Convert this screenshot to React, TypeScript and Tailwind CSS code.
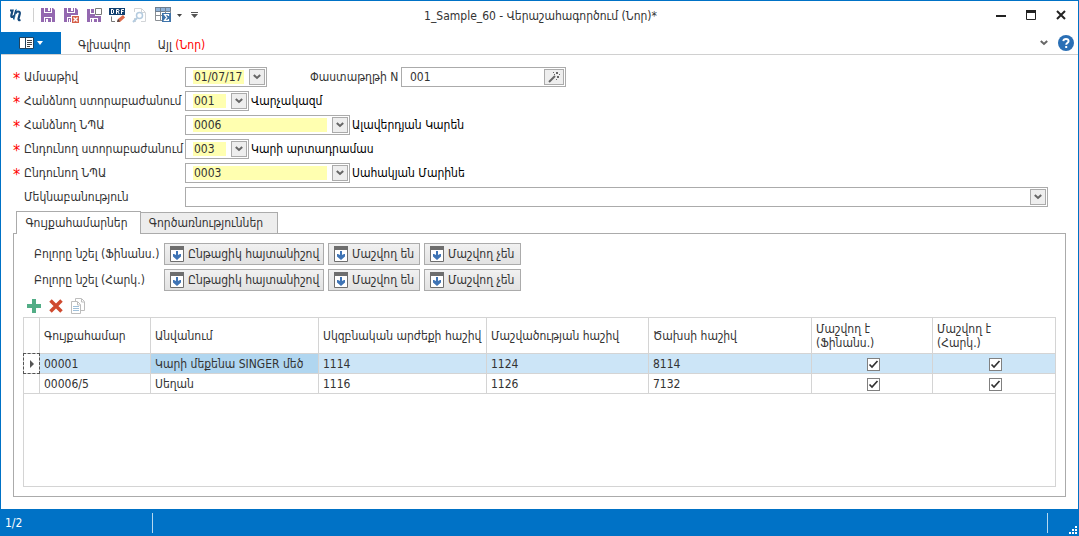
import { useState } from 'react'
import type { ReactNode } from 'react'

type Asset = {
  code: string
  name: string
  cost: string
  wear: string
  expense: string
}

const assets: Asset[] = [
  { code: '00001', name: 'Կարի մեքենա SINGER մեծ', cost: '1114', wear: '1124', expense: '8114' },
  { code: '00006/5', name: 'Սեղան', cost: '1116', wear: '1126', expense: '7132' },
]

const columns = [
  'Գույքահամար',
  'Անվանում',
  'Սկզբնական արժեքի հաշիվ',
  'Մաշվածության հաշիվ',
  'Ծախսի հաշիվ',
  'Մաշվող է (Ֆինանս.)',
  'Մաշվող է (Հարկ.)',
]

function Icon({ children, size = 16 }: { children: ReactNode; size?: number }) {
  return (
    <svg width={size} height={size} viewBox={`0 0 ${size} ${size}`} fill="none" aria-hidden="true" className="block shrink-0">
      {children}
    </svg>
  )
}

function LogoIcon() {
  return (
    <Icon>
      <path d="M3 3.500h2.500L4.300 8.500q-.3 1.700 1.200 1.500 1.200-.2 1.700-1.500" stroke="#14497d" strokeWidth="2.200" />
      <path d="M9.500 2 6.800 13" stroke="#5ba4d3" strokeWidth="1.200" />
      <path d="M8.500 6.500q.8-2 2.500-2 2.300 0 1.800 2.300l-1.300 5q-.3 1.700 2 1.200" stroke="#14497d" strokeWidth="2.200" />
      <path d="M8.700 3 6.500 12" stroke="#14497d" strokeWidth="1.200" />
    </Icon>
  )
}

function SaveIcon() {
  return (
    <Icon>
      <path d="M1 1h3v5h8V1h1l2 2v12h-3v-5H4v5H1z" fill="#9468b0" />
      <path d="M5 1h6v4H5zM5 11h6v4H5z" fill="#9468b0" />
      <path d="M8 1h2v3H8zM6 12h2v3H6z" fill="#fff" />
    </Icon>
  )
}

function SaveCloseIcon() {
  return (
    <Icon>
      <path d="M1 1h3v5h8V1h1l2 2v5H8v2H4v5H1z" fill="#9468b0" />
      <path d="M5 1h6v4H5zM5 11h3v4H5z" fill="#9468b0" />
      <path d="M8 1h2v3H8zM6 12h1v3H6z" fill="#fff" />
      <path d="M9 9h7v7H9z" fill="#d6604a" />
      <path d="m10.500 10.500 4 4m0-4-4 4" stroke="#fff" strokeWidth="1.300" />
    </Icon>
  )
}

function SaveNewIcon() {
  return (
    <Icon>
      <path d="M1 2h3v5h5v2h6v6h-3v-4H4v4H1zM5 2h3v4H5zM5 12h6v3H5z" fill="#9468b0" />
      <path d="M6 12h2v3H6z" fill="#fff" />
      <path d="M9.500 1.500h6v6h-6z" stroke="#777" fill="#fff" />
    </Icon>
  )
}

function DraftIcon() {
  return (
    <Icon>
      <path d="M0 1h16v7H0z" fill="#12406f" />
      <path d="M2.500 2v5M2 2.500h2l.5.500v3l-.5.500H2M7.500 7V2.500h2l.5.500v1l-.5.500h-2M9 5l1.200 2M12.500 7V2.500H15m-2.500 2h2" stroke="#fff" />
      <path d="M2.500 9.500v5H6" stroke="#777" />
      <path d="m8 15 1-3 5-4 2 2.500-5 4.500z" fill="#dc6b4c" />
      <path d="m8 15 1-3 2 2.500z" fill="#444" />
    </Icon>
  )
}

function PreviewIcon() {
  return (
    <Icon>
      <path d="M2.500 5V1.500h7l4 4v9H9M2.500 11v3.500H4M9.500 2v3.500H13" stroke="#d2d5d8" />
      <circle cx="7.500" cy="8.500" r="3" stroke="#b4cbdf" strokeWidth="1.500" />
      <path d="m5 11-4 4" stroke="#b4cbdf" strokeWidth="2" />
    </Icon>
  )
}

function SumTableIcon() {
  return (
    <Icon>
      <path d="M0 0h16v5H0z" fill="#6f7f90" />
      <path d="M1 1h4v3H1zM6 1h4v3H6zM11 1h4v3h-4z" fill="#8fb2d8" />
      <path d="M.5 5v8.500H7M5.500 5v8.500M10.500 4v2M15.500 4v2M0 8.500h7" stroke="#8a8f94" />
      <path d="M7 6h9v9H7z" fill="#3f74ab" />
      <path d="M13.500 9V7.700h-4l2.300 2.800-2.300 2.800h4V12" stroke="#fff" strokeWidth="1.200" />
    </Icon>
  )
}

function FillDownIcon() {
  return (
    <svg width="14" height="16" viewBox="0 0 14 16" fill="none" aria-hidden="true" className="block shrink-0">
      <path d="M.5.500h13v15H.5z" fill="#fff" stroke="#6e6e6e" />
      <path d="M0 0h14v4H0z" fill="#6e6e6e" />
      <path d="M6 5h2v4l2-1h1v2.500L7 14l-4-3.500V8h1l2 1z" fill="#3f74b5" />
    </svg>
  )
}

function Chevron() {
  return (
    <svg width="8" height="6" viewBox="0 0 8 6" fill="none" aria-hidden="true" className="block">
      <path d="m.8 1 3.200 3L7.200 1" stroke="#666" strokeWidth="2" />
    </svg>
  )
}

const arrowBox = 'flex w-4 h-4 items-center justify-center border border-[#ababab] bg-[#eeeeee]'

type ComboProps = { id: string; value: string; className: string; plain?: boolean }

function Combo({ id, value, className, plain }: ComboProps) {
  return (
    <div className={`relative h-5 border border-[#ababab] ${className}`}>
      <select
        id={id}
        defaultValue={value}
        className={`block h-full w-full appearance-none pt-0.5 pr-[22px] pb-0.5 pl-[7px] indent-px leading-[14px] bg-clip-content outline-none ${plain ? '' : 'bg-[#ffffb0]'}`}
      >
        <option value={value}>{value}</option>
      </select>
      <span className={`pointer-events-none absolute top-px right-px ${arrowBox}`}>
        <Chevron />
      </span>
    </div>
  )
}

function FieldLabel({ htmlFor, children, required = true }: { htmlFor: string; children: ReactNode; required?: boolean }) {
  return (
    <label htmlFor={htmlFor} className="flex h-5 w-[172px] shrink-0 whitespace-nowrap">
      <span className="w-[11px] shrink-0 text-base leading-6 text-[#ff0000]">{required ? '*' : ''}</span>
      {children}
    </label>
  )
}

function FillRow({ label }: { label: string }) {
  const button = 'flex h-[22px] items-center gap-1 border border-[#ababab] bg-linear-to-b from-[#f1f1f1] to-[#e2e2e2] pl-[5px] whitespace-nowrap'
  return (
    <div className="flex items-center gap-1">
      <span className="w-[126px] whitespace-nowrap">{label}</span>
      <button type="button" className={`w-40 ${button}`}><FillDownIcon />Ընթացիկ հայտանիշով</button>
      <button type="button" className={`w-23 ${button}`}><FillDownIcon />Մաշվող են</button>
      <button type="button" className={`w-[97px] ${button}`}><FillDownIcon />Մաշվող չեն</button>
    </div>
  )
}

function CheckBox({ label }: { label: string }) {
  const [checked, setChecked] = useState(true)
  return (
    <span className="relative mx-auto block size-[13px]">
      <input
        type="checkbox"
        aria-label={label}
        checked={checked}
        onChange={(e) => setChecked(e.target.checked)}
        className="block size-[13px] appearance-none border border-[#808080] bg-white"
      />
      {checked && (
        <svg width="13" height="13" viewBox="0 0 13 13" fill="none" aria-hidden="true" className="pointer-events-none absolute inset-0">
          <path d="M2.500 6.500 5 9l5.500-6" stroke="#333" strokeWidth="1.700" />
        </svg>
      )}
    </span>
  )
}

function TitleBar() {
  return (
    <header className="flex h-[31px] items-center pr-3 pb-[3px] pl-1.5">
      <div className="flex flex-1 items-center gap-[7px]">
        <LogoIcon />
        <span className="mr-[-1px] ml-[3px] h-3.5 w-px bg-[#d0d0d0]" />
        <button type="button" aria-label="Save"><SaveIcon /></button>
        <button type="button" aria-label="Save and close"><SaveCloseIcon /></button>
        <button type="button" aria-label="Save and new"><SaveNewIcon /></button>
        <button type="button" aria-label="Save draft"><DraftIcon /></button>
        <button type="button" aria-label="Preview"><PreviewIcon /></button>
        <button type="button" aria-label="Totals" className="flex items-center gap-1.5">
          <SumTableIcon />
          <svg width="5" height="3" viewBox="0 0 5 3" aria-hidden="true"><path d="M0 0h5L2.500 3z" fill="#444" /></svg>
        </button>
        <button type="button" aria-label="Customize toolbar" className="ml-0.5">
          <svg width="7" height="6" viewBox="0 0 7 6" aria-hidden="true"><path d="M0 0h7v1H0zM0 2h7L3.500 6z" fill="#555" /></svg>
        </button>
      </div>
      <h1 className="pt-0.5 pl-2 whitespace-nowrap">1_Sample_60 - Վերաշահագործում (Նոր)*</h1>
      <div className="flex flex-1 items-center justify-end gap-5">
        <button type="button" aria-label="Minimize">
          <Icon size={10}><path d="M0 5h10v2H0z" fill="#222" /></Icon>
        </button>
        <button type="button" aria-label="Maximize">
          <Icon size={10}><path d="M.5.500h9v9h-9z" stroke="#222" /><path d="M0 0h10v3H0z" fill="#222" /></Icon>
        </button>
        <button type="button" aria-label="Close">
          <Icon size={10}><path d="m1 1 8 8m0-8L1 9" stroke="#222" strokeWidth="2" /></Icon>
        </button>
      </div>
    </header>
  )
}

function Ribbon() {
  return (
    <nav className="flex h-[23px] items-center border-b border-[#d0d0d0] pr-1">
      <button type="button" aria-label="Menu" className="flex h-[22px] w-15 items-center justify-center gap-[3px] bg-[#0072c6]">
        <svg width="15" height="12" viewBox="0 0 15 12" fill="none" aria-hidden="true">
          <path d="M.5.500h14v11H.5z" fill="#fff" stroke="#20435f" />
          <path d="M6.500 1v10" stroke="#20435f" />
          <path d="M8 3.500h5M8 5.500h5M8 7.500h5M8 9.500h3" stroke="#444" />
        </svg>
        <svg width="6" height="4" viewBox="0 0 6 4" aria-hidden="true"><path d="M0 0h6L3 4z" fill="#fff" /></svg>
      </button>
      <button type="button" className="ml-[17px] pt-1">Գլխավոր</button>
      <button type="button" className="ml-[27px] pt-1">Այլ <span className="text-[#ff0000]">(Նոր)</span></button>
      <div className="flex-1" />
      <button type="button" aria-label="Collapse ribbon" className="mr-2.5"><Chevron /></button>
      <button type="button" aria-label="Help">
        <Icon>
          <circle cx="8" cy="8" r="8" fill="#2a6fb5" />
          <path d="M5.300 6.200Q5.500 4 8 4t2.600 2q0 1.200-1.200 1.900T8.200 9.800" stroke="#fff" strokeWidth="1.900" />
          <path d="M7.200 11h2v2h-2z" fill="#fff" />
        </Icon>
      </button>
    </nav>
  )
}

function HeaderForm() {
  return (
    <form className="flex flex-col gap-1 pr-[18px] leading-5">
      <div className="flex">
        <FieldLabel htmlFor="date">Ամսաթիվ</FieldLabel>
        <Combo id="date" value="01/07/17" className="w-[82px]" />
        <label htmlFor="number" className="ml-[43px] w-[91px] whitespace-nowrap">Փաստաթղթի N</label>
        <div className="flex h-5 w-[165px] border border-[#ababab] pr-px">
          <input id="number" defaultValue="001" className="min-w-0 flex-1 pl-2 outline-none" />
          <button type="button" aria-label="Generate number" className="mt-px flex h-4 w-5 items-center justify-center border border-[#ababab] bg-[#eeeeee]">
            <svg width="12" height="12" viewBox="0 0 12 12" fill="none" aria-hidden="true">
              <path d="m1 11 6-6" stroke="#666" strokeWidth="2" />
              <path d="M5 1h1v1H5zM8 1h2v2H8zM9 5h2v2H9zM6 3h1v1H6zM11 3h1v1h-1zM8 8h1v1H8z" fill="#666" />
            </svg>
          </button>
        </div>
      </div>
      <div className="flex">
        <FieldLabel htmlFor="fromUnit">Հանձնող ստորաբաժանում</FieldLabel>
        <Combo id="fromUnit" value="001" className="w-16" />
        <span className="pl-0.5 text-black">Վարչակազմ</span>
      </div>
      <div className="flex">
        <FieldLabel htmlFor="fromPerson">Հանձնող ՆՊԱ</FieldLabel>
        <Combo id="fromPerson" value="0006" className="w-[165px]" />
        <span className="pl-0.5 text-black">Ալավերդյան Կարեն</span>
      </div>
      <div className="flex">
        <FieldLabel htmlFor="toUnit">Ընդունող ստորաբաժանում</FieldLabel>
        <Combo id="toUnit" value="003" className="w-16" />
        <span className="pl-0.5 text-black">Կարի արտադրամաս</span>
      </div>
      <div className="flex">
        <FieldLabel htmlFor="toPerson">Ընդունող ՆՊԱ</FieldLabel>
        <Combo id="toPerson" value="0003" className="w-[165px]" />
        <span className="pl-0.5 text-black">Սահակյան Մարինե</span>
      </div>
      <div className="flex">
        <FieldLabel htmlFor="comment" required={false}>Մեկնաբանություն</FieldLabel>
        <Combo id="comment" value="" plain className="flex-1" />
      </div>
    </form>
  )
}

function AssetTable() {
  return (
    <table className="w-full table-fixed border-separate border-spacing-0 text-left">
      <colgroup>
        <col className="w-4" />
        <col className="w-[111px]" />
        <col className="w-[168px]" />
        <col className="w-[168px]" />
        <col className="w-[162px]" />
        <col className="w-[163px]" />
        <col className="w-[121px]" />
        <col className="w-[122px]" />
      </colgroup>
      <thead>
        <tr className="h-9 leading-[14px]">
          <th className="border-r border-b border-[#d4d4d4]" />
          {columns.map((title) => (
            <th key={title} className="border-r border-b border-[#d4d4d4] px-1 font-normal last:border-r-0">
              <span className={title.startsWith('Մաշվող') ? 'block w-18' : 'whitespace-nowrap'}>{title}</span>
            </th>
          ))}
        </tr>
      </thead>
      <tbody>
        {assets.map((asset, i) => (
          <tr key={asset.code} className={`h-5 leading-[18px] *:border-r *:border-b *:border-[#d4d4d4] *:last:border-r-0 ${i === 0 ? 'bg-[#cce5f7]' : ''}`}>
            <td className="bg-white">
              {i === 0 && (
                <span className="flex h-[19px] items-center justify-center outline-1 outline-dashed outline-[#555]">
                  <svg width="4" height="8" viewBox="0 0 4 8" aria-hidden="true"><path d="M0 0v8l4-4z" fill="#555" /></svg>
                </span>
              )}
            </td>
            <td className="px-1">{asset.code}</td>
            <td className={`px-1 whitespace-nowrap ${i === 0 ? 'bg-[#b0d6f0]' : ''}`}>{asset.name}</td>
            <td className="px-1">{asset.cost}</td>
            <td className="px-1">{asset.wear}</td>
            <td className="px-1">{asset.expense}</td>
            <td className="pt-px pl-0.5"><CheckBox label={`${asset.code} ${columns[5]}`} /></td>
            <td className="pt-px pl-0.5"><CheckBox label={`${asset.code} ${columns[6]}`} /></td>
          </tr>
        ))}
      </tbody>
    </table>
  )
}

export default function App() {
  return (
    <div className="flex min-h-screen flex-col border-x border-t border-[#0072c6] bg-white font-['DejaVu_Sans_Condensed','DejaVu_Sans',sans-serif] text-[12px] text-[#333333]">
      <TitleBar />
      <Ribbon />
      <main className="flex flex-1 flex-col px-3 pt-3 pb-3">
        <HeaderForm />
        <div role="tablist" className="z-10 mt-1 -mb-px flex items-end pl-[3px]">
          <button type="button" role="tab" aria-selected="true" className="h-[23px] w-[125px] border border-b-0 border-[#ababab] bg-white pr-1 whitespace-nowrap">
            Գույքահամարներ
          </button>
          <button type="button" role="tab" aria-selected="false" className="-ml-px mb-px h-[21px] w-[138px] border border-b-0 border-[#ababab] bg-[#ededed] pr-1.5 whitespace-nowrap">
            Գործառնություններ
          </button>
        </div>
        <section className="flex flex-1 flex-col border border-[#ababab] px-[9px] pt-[9px] pb-[9px]">
          <div className="flex flex-col gap-1 pl-[11px]">
            <FillRow label="Բոլորը նշել (Ֆինանս.)" />
            <FillRow label="Բոլորը նշել (Հարկ.)" />
          </div>
          <div className="flex gap-1.5 pt-[7px] pb-[3px] pl-[3px]">
            <button type="button" aria-label="Add">
              <Icon><path d="M6 1h4v5h5v4h-5v5H6v-5H1V6h5z" fill="#52ad86" /></Icon>
            </button>
            <button type="button" aria-label="Delete">
              <Icon><path d="m2.500 2.500 11 11m0-11-11 11" stroke="#cf4a2f" strokeWidth="3.500" /></Icon>
            </button>
            <button type="button" aria-label="Copy">
              <Icon>
                <path d="M5.500 3V.500h6l3 3v9H11M11.500 1v3H14" stroke="#bdbdbd" />
                <path d="M1.500 3.500h6l3 3v9h-9z" fill="#fff" stroke="#bdbdbd" />
                <path d="M7.500 4v3H10" stroke="#bdbdbd" />
                <path d="M3 8.500h6M3 10.500h6M3 12.500h6" stroke="#9fc0da" />
              </Icon>
            </button>
          </div>
          <div className="flex-1 border border-[#d4d4d4]">
            <AssetTable />
          </div>
        </section>
      </main>
      <footer className="flex h-[27px] items-center bg-[#0072c6] pl-1 text-white">
        <span className="w-[147px]">1/2</span>
        <span className="h-5 w-px bg-[#b5d8f0]" />
        <div className="flex-1" />
        <span className="h-5 w-px bg-[#b5d8f0]" />
        <svg width="30" height="27" viewBox="0 0 30 27" fill="#fff" aria-hidden="true">
          <path d="M27 17h2v2h-2zM24 20h2v2h-2zM27 20h2v2h-2zM21 23h2v2h-2zM24 23h2v2h-2zM27 23h2v2h-2z" />
        </svg>
      </footer>
    </div>
  )
}
